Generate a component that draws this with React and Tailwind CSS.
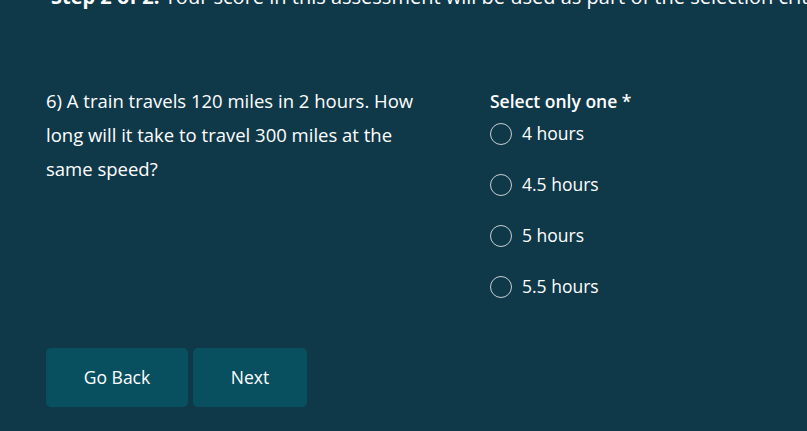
const options = ['4 hours', '4.5 hours', '5 hours', '5.5 hours']

function RadioOption({ label }) {
  return (
    <label className="flex h-[51px] items-start gap-[10px]">
      <span className="mt-[-10px] h-[22px] w-[22px] shrink-0 rounded-full border border-[#c8d0d4]" />
      <span className="mt-[-11px] text-[17.5px] leading-[22px] text-white">{label}</span>
    </label>
  )
}

export default function App() {
  return (
    <div className="h-[431px] w-[807px] overflow-hidden bg-[#0f3949] font-['Open_Sans',sans-serif] text-white">
      <p className="mt-[-14px] whitespace-nowrap pl-[51px] text-[20px] leading-[22px]">
        <b>Step 2 of 2:</b> Your score in this assessment will be used as part of the selection criteria
      </p>

      <div className="mt-[76px] flex pl-[46px]">
        <p className="w-[395px] text-[18.5px] leading-[34px]">
          6) A train travels 120 miles in 2 hours. How long will it take to travel 300 miles at the same speed?
        </p>
        <div className="ml-[49px] pt-[5px]">
          <p className="text-[17.5px] font-semibold leading-[24px]">Select only one *</p>
          <div className="mt-[20px] flex flex-col">
            {options.map((o) => (
              <RadioOption key={o} label={o} />
            ))}
          </div>
        </div>
      </div>

      <div className="mt-[11px] flex gap-[5px] pl-[46px]">
        <button type="button" className="h-[59px] w-[142px] rounded-[5px] bg-[#08505f] text-[17.5px] text-white">
          Go Back
        </button>
        <button type="button" className="h-[59px] w-[114px] rounded-[5px] bg-[#08505f] text-[17.5px] text-white">
          Next
        </button>
      </div>
    </div>
  )
}
